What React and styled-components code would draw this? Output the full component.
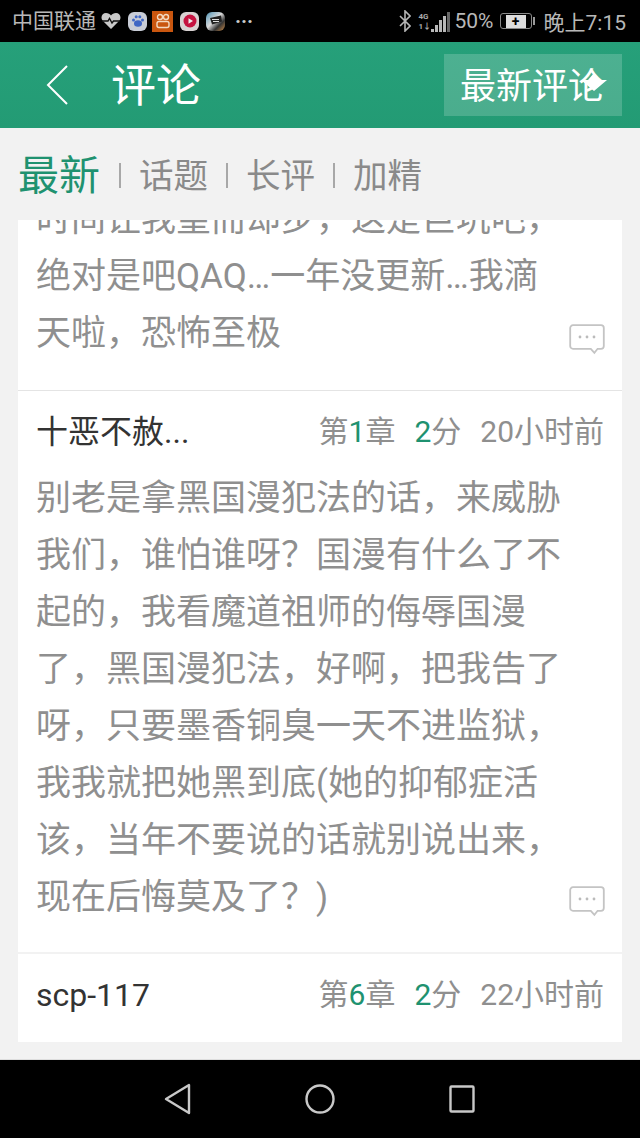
import React from "react";
import styled, { createGlobalStyle } from "styled-components";

const GlobalStyle = createGlobalStyle`
  html, body {
    margin: 0;
    padding: 0;
    background: #f2f2f2;
    font-family: Roboto, "Noto Sans CJK SC", sans-serif;
  }
`;

const comments = [
  {
    id: 1,
    clipped: true,
    lines: ["时间让我望而却步，这是巨坑吧，", "绝对是吧QAQ…一年没更新…我滴", "天啦，恐怖至极"],
  },
  {
    id: 2,
    name: "十恶不赦...",
    chapter: 1,
    score: 2,
    time: "20小时前",
    lines: [
      "别老是拿黑国漫犯法的话，来威胁",
      "我们，谁怕谁呀？国漫有什么了不",
      "起的，我看魔道祖师的侮辱国漫",
      "了，黑国漫犯法，好啊，把我告了",
      "呀，只要墨香铜臭一天不进监狱，",
      "我我就把她黑到底(她的抑郁症活",
      "该，当年不要说的话就别说出来，",
      "现在后悔莫及了？)",
    ],
  },
];

const BubbleIcon = () => (
  <Bubble viewBox="0 0 36 31" width="36" height="31">
    <path
      d="M4 1.200h28a2.800 2.800 0 0 1 2.800 2.800v18a2.800 2.800 0 0 1-2.800 2.800h-3.400l-3.200 4-3.600-4H4A2.800 2.800 0 0 1 1.200 22V4A2.800 2.800 0 0 1 4 1.200z"
      fill="none"
      stroke="#c4c4c4"
      strokeWidth="1.800"
    />
    <circle cx="11" cy="13" r="1.400" fill="#bbb" />
    <circle cx="18" cy="13" r="1.400" fill="#bbb" />
    <circle cx="25" cy="13" r="1.400" fill="#bbb" />
  </Bubble>
);

const Meta = ({ chapter, score, time }) => (
  <MetaRow>
    <span>
      第<Green>{chapter}</Green>章
    </span>
    <span>
      <Green>{score}</Green>分
    </span>
    <span>{time}</span>
  </MetaRow>
);

const StatusBar = () => (
  <Status>
    <StatusGroup>
      <Carrier>中国联通</Carrier>
      <svg width="20" height="16" viewBox="0 0 20 16">
        <path d="M10 16 1.500 7.500C-1 4 1.500 0 5 0c2.200 0 4 1 5 2.500C11 1 12.800 0 15 0c3.500 0 6 4 3.500 7.500z" fill="#c9c9c9" />
        <path d="M1 8h6l1.500-2.500L11 10l1.500-2H19" fill="none" stroke="#111" strokeWidth="1.400" />
      </svg>
      <AppIcon $bg="#c8ccd6">
        <svg width="14" height="14" viewBox="0 0 14 14">
          <ellipse cx="7" cy="9.500" rx="4" ry="3.300" fill="#3f66c4" />
          <circle cx="2.500" cy="6" r="1.500" fill="#3f66c4" />
          <circle cx="5.200" cy="2.800" r="1.500" fill="#3f66c4" />
          <circle cx="8.800" cy="2.800" r="1.500" fill="#3f66c4" />
          <circle cx="11.500" cy="6" r="1.500" fill="#3f66c4" />
        </svg>
      </AppIcon>
      <SquareApp>
        <svg width="16" height="16" viewBox="0 0 16 16">
          <circle cx="5" cy="4" r="2.500" fill="none" stroke="#f3d9c0" strokeWidth="1.400" />
          <circle cx="11" cy="4" r="2.500" fill="none" stroke="#f3d9c0" strokeWidth="1.400" />
          <rect x="2" y="8.500" width="12" height="6" rx="2" fill="none" stroke="#f3d9c0" strokeWidth="1.400" />
        </svg>
      </SquareApp>
      <AppIcon $bg="#d8d2d2">
        <svg width="14" height="14" viewBox="0 0 14 14">
          <circle cx="7" cy="7" r="6.500" fill="#c4123f" />
          <path d="M5.500 4.200 10 7l-4.500 2.800z" fill="#eee" />
        </svg>
      </AppIcon>
      <AppIcon $bg="linear-gradient(135deg,#4d93b5 0%,#d9d9d9 45%,#333 70%,#c98a4a 100%)">
        <svg width="14" height="12" viewBox="0 0 14 12">
          <path d="M1 3 12 .5l1 6-10 3z" fill="#222" />
          <path d="M3 4.500h7M4 6.500h6" stroke="#ddd" strokeWidth="1" />
        </svg>
      </AppIcon>
      <Dots>···</Dots>
    </StatusGroup>
    <RightGroup>
      <svg width="12" height="22" viewBox="0 0 12 22">
        <path d="M1 6l10 10-5 5V1l5 5L1 16" fill="none" stroke="#b5b5b5" strokeWidth="1.600" />
      </svg>
      <Signal>
        <NetLabel>
          <span>4G</span>
          <span>1↓</span>
        </NetLabel>
        <Bar $h="3px" />
        <Bar $h="7px" />
        <Bar $h="12px" />
        <Bar $h="16px" />
        <Bar $h="20px" $dim />
      </Signal>
      <Percent>50%</Percent>
      <Battery>
        <BatteryFill>+</BatteryFill>
      </Battery>
      <BatteryCap />
      <Clock>晚上7:15</Clock>
    </RightGroup>
  </Status>
);

const App = () => {
  return (
    <Page>
      <GlobalStyle />
      <StatusBar />
      <Header>
        <HeaderLeft>
          <svg width="24" height="42" viewBox="0 0 24 42">
            <path d="M21 2 2 21l19 19" fill="none" stroke="#fff" strokeWidth="2" />
          </svg>
          <Title>评论</Title>
        </HeaderLeft>
        <SortButton>
          最新评论
          <Caret viewBox="0 0 26 19" width="26" height="19">
            <path d="M0 8h7l6-7 6 7h7L13 19z" fill="#fff" />
          </Caret>
        </SortButton>
      </Header>
      <Tabs>
        <ActiveTab>最新</ActiveTab>
        <Tab>话题</Tab>
        <Tab>长评</Tab>
        <Tab>加精</Tab>
      </Tabs>
      <List>
        {comments.map(c => (
          <Card key={c.id} $clipped={c.clipped}>
            {c.name && (
              <CardHead>
                <Name>{c.name}</Name>
                <Meta chapter={c.chapter} score={c.score} time={c.time} />
              </CardHead>
            )}
            <Body $clipped={c.clipped}>
              {c.lines.map(line => (
                <div key={line}>{line}</div>
              ))}
            </Body>
            <BubbleIcon />
          </Card>
        ))}
        <LastCard>
          <CardHead>
            <LatinName>scp-117</LatinName>
            <Meta chapter={6} score={2} time="22小时前" />
          </CardHead>
        </LastCard>
      </List>
      <NavBar>
        <svg width="28" height="32" viewBox="0 0 28 32">
          <path d="M25 2v28L2 16z" fill="none" stroke="#c8c8c8" strokeWidth="2.400" strokeLinejoin="round" />
        </svg>
        <NavCircle width="30" height="30" viewBox="0 0 30 30">
          <circle cx="15" cy="15" r="13.500" fill="none" stroke="#c8c8c8" strokeWidth="2.400" />
        </NavCircle>
        <NavSquare width="26" height="28" viewBox="0 0 26 28">
          <rect x="1.500" y="1.500" width="23" height="25" rx="1" fill="none" stroke="#c8c8c8" strokeWidth="2.400" />
        </NavSquare>
      </NavBar>
    </Page>
  );
};

export default App;

const Page = styled.div`
  width: 640px;
  height: 1138px;
  display: flex;
  flex-direction: column;
  overflow: hidden;
  background: #f2f2f2;
`;

const Status = styled.div`
  height: 42px;
  flex: none;
  background: #000;
  color: #b8b8b8;
  display: flex;
  justify-content: space-between;
  align-items: center;
  padding: 0 14px 0 12px;
`;

const StatusGroup = styled.div`
  display: flex;
  align-items: center;
  gap: 7px;
`;

const RightGroup = styled.div`
  display: flex;
  align-items: center;
`;

const Carrier = styled.span`
  font-size: 21px;
  line-height: 42px;
  margin-right: -2px;
`;

const AppIcon = styled.span`
  width: 19px;
  height: 19px;
  border-radius: 6px;
  background: ${props => props.$bg};
  display: flex;
  align-items: center;
  justify-content: center;
`;

const SquareApp = styled.span`
  width: 21px;
  height: 21px;
  margin-left: -2px;
  background: #c9560f;
  display: flex;
  align-items: center;
  justify-content: center;
`;

const Dots = styled.span`
  font-size: 20px;
  font-weight: 700;
  margin-left: 3px;
  letter-spacing: 0;
  color: #ccc;
`;

const Signal = styled.div`
  display: flex;
  align-items: flex-end;
  gap: 1px;
  height: 22px;
  margin-left: 8px;
`;

const NetLabel = styled.div`
  display: flex;
  flex-direction: column;
  width: 11px;
  font-size: 8px;
  line-height: 10px;
  font-weight: 700;
  color: #aaa;
`;

const Bar = styled.i`
  display: block;
  width: 3px;
  height: ${props => props.$h};
  background: ${props => (props.$dim ? "#666" : "#b8b8b8")};
`;

const Percent = styled.span`
  font-size: 21px;
  margin-left: 5px;
`;

const Battery = styled.div`
  width: 32px;
  height: 16px;
  box-sizing: border-box;
  border: 1.500px solid #888;
  border-radius: 3px;
  display: flex;
  align-items: center;
  justify-content: center;
  margin-left: 6px;
`;

const BatteryFill = styled.span`
  width: 20px;
  height: 13px;
  background: #ddd;
  color: #000;
  font-size: 14px;
  font-weight: 700;
  line-height: 13px;
  text-align: center;
`;

const BatteryCap = styled.span`
  width: 2px;
  height: 8px;
  background: #999;
  margin-left: 1px;
`;

const Clock = styled.span`
  font-size: 21px;
  margin-left: 9px;
`;

const Header = styled.div`
  height: 86px;
  flex: none;
  box-sizing: border-box;
  background: linear-gradient(180deg, #26a07a 0%, #239b74 100%);
  display: flex;
  align-items: center;
  justify-content: space-between;
  padding: 0 18px 0 46px;
`;

const HeaderLeft = styled.div`
  display: flex;
  align-items: center;
  gap: 41px;
`;

const Title = styled.div`
  color: #fff;
  font-size: 45px;
  line-height: 60px;
  margin-top: 3px;
`;

const SortButton = styled.div`
  position: relative;
  width: 178px;
  height: 62px;
  box-sizing: border-box;
  padding-right: 2px;
  background: rgba(255, 255, 255, 0.18);
  color: #fff;
  font-size: 36px;
  line-height: 66px;
  text-align: center;
  white-space: nowrap;
`;

const Caret = styled.svg`
  position: absolute;
  right: 15px;
  top: 18px;
`;

const Tabs = styled.div`
  height: 92px;
  flex: none;
  box-sizing: border-box;
  display: flex;
  align-items: center;
  padding: 4px 0 0 18px;
`;

const Tab = styled.div`
  color: #8a8a8a;
  font-size: 34.500px;
  line-height: 46px;
  margin-left: 18px;
  position: relative;
  padding-left: 20px;

  &::before {
    content: "";
    position: absolute;
    left: 0;
    top: 10px;
    height: 25px;
    width: 2px;
    background: #a8a8a8;
  }
`;

const ActiveTab = styled.div`
  color: #1f9270;
  font-size: 41px;
  line-height: 54px;
  margin-right: 1px;
`;

const List = styled.div`
  flex: 1;
  overflow: hidden;
  padding: 0 18px;
  display: flex;
  flex-direction: column;
  gap: 2px;
`;

const Card = styled.div`
  position: relative;
  flex: none;
  overflow: hidden;
  background: #fff;
  box-sizing: border-box;
  padding: 0 18px;
  height: ${props => (props.$clipped ? "171px" : "561px")};
  margin-bottom: ${props => (props.$clipped ? "-2px" : "0")};
  border-bottom: ${props => (props.$clipped ? "1px solid #e4e4e4" : "0")};
`;

const LastCard = styled(Card)`
  height: 88px;
`;

const CardHead = styled.div`
  height: 79px;
  display: flex;
  justify-content: space-between;
  align-items: center;
`;

const Name = styled.div`
  color: #333;
  font-size: 32px;
  margin-bottom: 4px;
`;

const LatinName = styled.div`
  color: #333;
  font-size: 32px;
  margin-top: 3px;
`;

const MetaRow = styled.div`
  display: flex;
  gap: 19px;
  color: #8f8f8f;
  font-size: 30px;
  margin-bottom: 4px;
`;

const Green = styled.span`
  color: #1f9270;
`;

const Body = styled.div`
  color: #8f8f8f;
  font-size: 35px;
  line-height: 57px;
  white-space: nowrap;
  margin-top: ${props => (props.$clipped ? "-29px" : "0")};
`;

const Bubble = styled.svg`
  position: absolute;
  right: 17px;
  bottom: 35px;
`;

const NavBar = styled.div`
  height: 79px;
  margin-top: -1px;
  flex: none;
  background: #000;
  display: flex;
  align-items: center;
  justify-content: center;
  gap: 112px;
  padding-right: 2px;
  border-top: 1px solid #ddd;
  box-sizing: border-box;
`;

const NavCircle = styled.svg`
  margin-left: 1px;
`;

const NavSquare = styled.svg`
  margin-left: 2px;
`;
